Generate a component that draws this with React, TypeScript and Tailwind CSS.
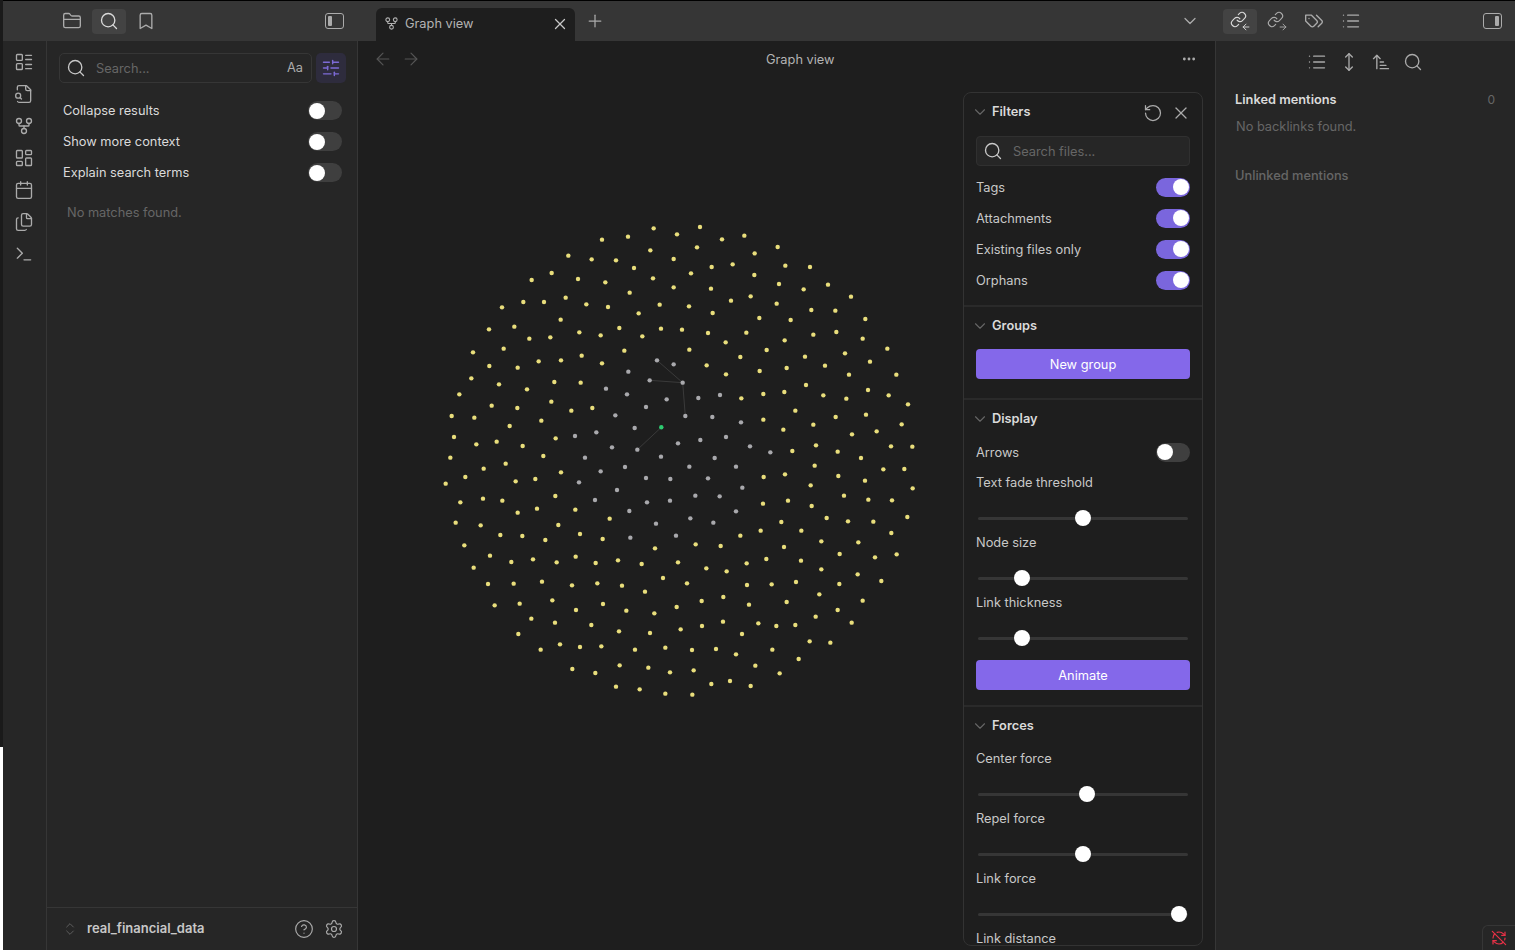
import type { ReactNode } from "react";
import {
  ArrowLeft, ArrowRight, ArrowUpNarrowWide, Bookmark, Calendar, ChevronDown, ChevronsUpDown, CircleHelp,
  Ellipsis, Files, FolderClosed, GitFork, LayoutDashboard, LayoutList, Link, List, MoveVertical, Plus,
  RefreshCwOff, RotateCcw, Search, Settings, SlidersHorizontal, Terminal, X,
} from "lucide-react";

const font = { fontFamily: "Inter, sans-serif" };

const TopBtn = ({ children, active }: { children: ReactNode; active?: boolean }) => (
  <div className={`w-[34px] h-[25px] rounded flex items-center justify-center ${active ? "bg-[#434343] text-[#dadada]" : "text-[#ababab]"}`}>
    {children}
  </div>
);

const PanelIcon = ({ right }: { right?: boolean }) => (
  <div className={`w-[19px] h-[16px] rounded-[3px] border-[1.5px] border-[#ababab] flex p-[2px] ${right ? "justify-end" : "justify-start"}`}>
    <div className="w-[4px] bg-[#ababab] rounded-[1px]" />
  </div>
);

const LinkArrow = ({ out }: { out?: boolean }) => (
  <div className="relative w-[20px] h-[20px]">
    <Link size={17} strokeWidth={1.6} className="absolute left-0 top-0" />
    <span className="absolute -right-[1px] -bottom-[1px]">
      {out ? <ArrowRight size={10} strokeWidth={2.2} /> : <ArrowLeft size={10} strokeWidth={2.2} />}
    </span>
  </div>
);

// lens sits bottom left, lucide's current file-search has it centred
const FileLens = () => (
  <svg width="20" height="20" viewBox="0 0 24 24" fill="none" stroke="currentColor" strokeWidth="1.6" strokeLinecap="round" strokeLinejoin="round">
    <path d="M14 2v4a2 2 0 0 0 2 2h4" />
    <path d="M4.268 21a2 2 0 0 0 1.727 1H18a2 2 0 0 0 2-2V7l-5-5H6a2 2 0 0 0-2 2v3" />
    <path d="m9 18-1.5-1.5" />
    <circle cx="5" cy="14" r="3" />
  </svg>
);

const TagsIcon = () => (
  <svg width="20" height="20" viewBox="0 0 24 24" fill="none" stroke="currentColor" strokeWidth="1.6" strokeLinecap="round" strokeLinejoin="round">
    <path d="M9 5H2v7l6.29 6.29c.94.94 2.48.94 3.42 0l3.58-3.58c.94-.94.94-2.48 0-3.42L9 5Z" />
    <path d="M6 9.01V9" />
    <path d="m15 5 6.3 6.3a2.4 2.4 0 0 1 0 3.4L17 19" />
  </svg>
);

const Toggle = ({ on }: { on?: boolean }) => (
  <div className={`w-[34px] h-[19px] rounded-full flex items-center px-[1px] ${on ? "bg-[#7a66dd] justify-end" : "bg-[#3f3f3f] justify-start"}`}>
    <div className="w-[16px] h-[16px] rounded-full bg-white" />
  </div>
);

const SearchRow = ({ label }: { label: string }) => (
  <div className="h-[31px] flex items-center justify-between pl-[16px] pr-[15px] text-[12.8px] text-[#dadada]">
    <span>{label}</span>
    <Toggle />
  </div>
);

const FilterRow = ({ label, on }: { label: string; on?: boolean }) => (
  <div className="h-[31px] flex items-center justify-between text-[12.8px] text-[#c8c8c8]">
    <span>{label}</span>
    <div className="-mt-[1px]"><Toggle on={on} /></div>
  </div>
);

const SliderRow = ({ label, pos }: { label: string; pos: number }) => (
  <div className="h-[60px] text-[12.8px] text-[#c8c8c8]">
    <div className="h-[24px] flex items-center">{label}</div>
    <div className="relative h-[3px] mt-[22px] mx-[2px] w-[210px] rounded-full bg-[#363636]">
      <div className="absolute -top-[7px] w-[16px] h-[16px] rounded-full bg-white" style={{ left: pos - 8 }} />
    </div>
  </div>
);

const SectionHead = ({ title }: { title: string }) => (
  <div className="flex items-center gap-[3px] -ml-[5px] h-[24px] text-[12.8px] font-semibold text-[#dadada]">
    <ChevronDown size={18} strokeWidth={1.5} className="text-[#666]" />
    <span>{title}</span>
  </div>
);

const PurpleBtn = ({ label }: { label: string }) => (
  <div className="h-[30px] pt-[1px] rounded bg-[#8468ea] flex items-center justify-center text-[12.8px] text-white">{label}</div>
);

// node positions read off the reference, 3x crop coords per 240px quadrant
type P = [number, number];
const yellow: { ox: number; oy: number; pts: P[] }[] = [
  { ox: 440, oy: 220, pts: [[641,25],[711,43],[564,50],[486,59],[631,91],[701,117],[385,107],[455,118],[528,121],[582,144],[335,159],[275,180],[414,177],[496,187],[639,175],[701,202],[569,218],[377,233],[250,246],[312,246],[186,262],[439,253],[504,261],[659,254],[596,280],[362,299],[223,320],[147,328],[538,324],[663,326],[418,337],[482,346],[607,349],[268,356],[331,352],[191,386],[99,397],[553,392],[425,407],[296,424],[363,421],[486,430],[148,438],[233,443],[94,475],[343,486],[422,488],[177,493],[261,508],[58,523],[334,545],[155,557],[232,564],[457,564],[394,572],[35,588],[103,593],[304,602],[209,618],[42,651],[347,655],[170,665],[109,673],[248,678],[310,708],[31,713]] },
  { ox: 680, oy: 220, pts: [[60,21],[193,47],[126,58],[51,82],[293,81],[224,100],[158,133],[95,141],[316,137],[390,141],[33,160],[223,165],[297,192],[444,194],[93,206],[371,208],[212,229],[513,230],[153,242],[290,251],[27,259],[394,270],[466,272],[98,279],[238,294],[332,300],[556,297],[6,329],[84,339],[199,338],[469,336],[400,344],[548,356],[314,361],[137,367],[28,389],[260,390],[622,386],[495,400],[181,411],[375,410],[570,425],[80,436],[435,437],[320,444],[239,453],[138,463],[507,464],[649,464],[378,495],[564,510],[313,516],[250,522],[430,526],[626,526],[184,535],[499,536],[684,553],[346,572],[558,584],[467,591],[250,599],[400,614],[665,613],[310,629],[590,634],[516,643],[408,676],[633,679],[697,680],[337,693],[473,695],[543,714]] },
  { ox: 440, oy: 460, pts: [[197,11],[131,26],[76,51],[363,37],[17,71],[227,64],[286,57],[346,108],[129,116],[187,122],[61,127],[406,149],[291,146],[233,158],[509,176],[47,188],[122,196],[355,195],[181,225],[247,228],[420,222],[316,240],[488,237],[73,256],[645,265],[150,287],[279,298],[214,306],[407,290],[350,307],[467,309],[534,301],[605,312],[714,307],[101,323],[669,354],[144,372],[221,371],[306,365],[396,376],[472,370],[546,377],[615,395],[337,421],[239,431],[164,436],[489,432],[710,441],[408,450],[559,452],[643,460],[274,476],[345,488],[454,495],[630,519],[537,514],[235,522],[360,553],[420,561],[484,559],[302,569],[585,569],[676,563],[539,616],[625,623],[397,627],[466,639],[690,637],[528,680],[599,688],[676,701]] },
  { ox: 680, oy: 460, pts: [[404,17],[610,28],[673,27],[315,43],[475,48],[251,51],[555,62],[392,76],[698,85],[492,107],[565,119],[636,121],[324,122],[249,131],[395,138],[682,171],[440,174],[304,186],[504,184],[580,185],[242,212],[364,212],[634,219],[181,227],[424,244],[535,247],[47,253],[122,258],[312,261],[479,282],[650,283],[585,292],[259,297],[363,302],[200,310],[79,325],[424,328],[140,334],[533,343],[604,363],[21,370],[348,366],[275,373],[201,375],[478,372],[418,403],[130,411],[65,423],[548,422],[207,434],[320,426],[473,450],[407,470],[66,498],[129,485],[235,490],[289,498],[346,495],[515,488],[2,508],[186,522],[389,544],[451,548],[36,570],[108,567],[168,583],[277,569],[356,597],[226,617],[41,631],[299,640],[94,672],[150,663],[212,678],[37,704]] },
];
const gray: { ox: number; oy: number; pts: P[] }[] = [
  { ox: 440, oy: 220, pts: [[651,421],[701,433],[565,455],[629,481],[498,506],[561,523],[680,538],[618,561],[526,586],[584,624],[469,637],[405,648],[516,682],[592,689],[714,670],[663,710],[435,713]] },
  { ox: 680, oy: 220, pts: [[8,488],[120,525],[55,534],[16,588],[97,591],[183,607],[138,651],[61,660],[210,679],[271,697],[104,714]] },
  { ox: 440, oy: 460, pts: [[555,21],[482,34],[618,54],[691,57],[417,67],[531,90],[465,120],[621,127],[690,122],[568,153],[648,191],[708,227],[571,233]] },
  { ox: 680, oy: 460, pts: [[28,20],[168,20],[84,55],[187,83],[46,107],[119,109],[168,154],[31,175],[100,188]] },
];

const Dots = ({ groups, fill }: { groups: { ox: number; oy: number; pts: P[] }[]; fill: string }) => (
  <>
    {groups.flatMap((g, gi) =>
      g.pts.map(([x, y], i) => <circle key={`${gi}-${i}`} cx={g.ox + x / 3} cy={g.oy + y / 3} r="2.2" fill={fill} />)
    )}
  </>
);

const Graph = () => (
  <svg className="absolute left-0 top-0 pointer-events-none" width="857" height="909" viewBox="358 41 857 909">
    <path d="M657 360.3 L682.7 382.7 M649.7 380.3 L682.7 382.7 L685.3 416 M661.3 427.3 L637.3 449.7" stroke="#3a3a3a" fill="none" />
    <Dots groups={yellow} fill="#e9de7c" />
    <Dots groups={gray} fill="#a9a9ad" />
    <circle cx="661.3" cy="427.3" r="2.2" fill="#2ecc71" />
  </svg>
);

export default function App() {
  return (
    <div className="w-[1515px] h-[950px] flex overflow-hidden bg-[#262626]" style={font}>
      <div className="w-[3px] flex flex-col">
        <div className="flex-1 bg-[#1a1a1a]" />
        <div className="h-[203px] bg-white" />
      </div>
      <div className="flex-1 flex flex-col min-w-0">
        {/* title bar */}
        <div className="h-[41px] border-t border-black bg-[#363636] flex items-center relative">
          <div className="w-[354px] flex items-center pl-[52px] gap-[3px] h-full">
            <TopBtn><FolderClosed size={20} strokeWidth={1.6} /></TopBtn>
            <TopBtn active><Search size={20} strokeWidth={1.6} /></TopBtn>
            <TopBtn><Bookmark size={20} strokeWidth={1.6} /></TopBtn>
            <div className="ml-auto mr-[13px]"><PanelIcon /></div>
          </div>
          <div className="self-end ml-[19px] w-[199px] h-[33px] rounded-t-[6px] bg-[#1e1e1e] flex items-center pl-[8px] pr-[6px] pb-[2px] text-[12.8px] text-[#b3b3b3]">
            <GitFork size={15} strokeWidth={1.7} />
            <span className="ml-[6px] flex-1">Graph view</span>
            <X size={18} strokeWidth={1.7} className="text-[#c8c8c8]" />
          </div>
          <Plus size={20} strokeWidth={1.5} className="ml-[10px] text-[#ababab]" />
          <div className="ml-auto flex items-center h-full">
            <ChevronDown size={20} strokeWidth={1.5} className="text-[#ababab] mr-[23px]" />
            <div className="flex items-center w-[151px] gap-[3px]">
              <TopBtn active><LinkArrow /></TopBtn>
              <TopBtn><LinkArrow out /></TopBtn>
              <TopBtn><TagsIcon /></TopBtn>
              <TopBtn><List size={20} strokeWidth={1.6} /></TopBtn>
            </div>
            <div className="ml-[109px] mr-[13px]"><PanelIcon right /></div>
          </div>
        </div>

        <div className="flex-1 flex min-h-0">
          {/* ribbon */}
          <div className="w-[44px] border-r border-[#363636] flex flex-col items-center pt-[11px] pr-[1px] gap-[12px] text-[#ababab]">
            <LayoutList size={20} strokeWidth={1.6} />
            <FileLens />
            <GitFork size={20} strokeWidth={1.6} />
            <LayoutDashboard size={20} strokeWidth={1.6} />
            <Calendar size={20} strokeWidth={1.6} />
            <Files size={20} strokeWidth={1.6} />
            <Terminal size={20} strokeWidth={1.6} />
          </div>

          {/* search panel */}
          <div className="w-[311px] border-r border-[#363636] flex flex-col">
            <div className="flex items-center gap-[4px] pl-[12px] pt-[12px]">
              <div className="w-[253px] h-[30px] rounded-[5px] border border-[#363636] flex items-center pl-[6px] pr-[8px] text-[12.8px]">
                <Search size={20} strokeWidth={1.6} className="text-[#c8c8c8]" />
                <span className="ml-[10px] flex-1 pt-[1px] text-[#666]">Search...</span>
                <span className="text-[#ababab]">Aa</span>
              </div>
              <div className="w-[30px] h-[30px] rounded-[5px] bg-[#2e2c3d] flex items-center justify-center text-[#7d6bd6]">
                <SlidersHorizontal size={20} strokeWidth={1.7} />
              </div>
            </div>
            <div className="mt-[12px]">
              <SearchRow label="Collapse results" />
              <SearchRow label="Show more context" />
              <SearchRow label="Explain search terms" />
            </div>
            <div className="mt-[15px] pl-[20px] text-[12.8px] text-[#666]">No matches found.</div>
            <div className="mt-auto h-[43px] border-t border-[#363636] flex items-center pl-[15px] pr-[13px] text-[13px] font-semibold text-[#c8c8c8]">
              <ChevronsUpDown size={16} strokeWidth={1.3} className="text-[#666]" />
              <span className="ml-[9px] flex-1">real_financial_data</span>
              <CircleHelp size={20} strokeWidth={1.4} className="text-[#ababab]" />
              <Settings size={20} strokeWidth={1.4} className="text-[#ababab] ml-[10px]" />
            </div>
          </div>

          {/* graph pane */}
          <div className="w-[858px] relative bg-[#1e1e1e] border-r border-[#363636] flex flex-col">
            <Graph />
            <div className="h-[36px] flex items-center pl-[15px] pr-[18px] text-[12.8px] text-[#b3b3b3] relative">
              <ArrowLeft size={20} strokeWidth={1.4} className="text-[#555]" />
              <ArrowRight size={20} strokeWidth={1.4} className="text-[#555] ml-[8px]" />
              <span className="ml-[345px] pt-[1px]">Graph view</span>
              <Ellipsis size={16} strokeWidth={2.2} className="ml-auto text-[#ababab]" />
            </div>
            {/* graph controls */}
            <div className="absolute right-[12px] top-[51px] w-[240px] h-[854px] rounded-[8px] border border-[#333] bg-[#1e1e1e] overflow-hidden">
              <div className="px-[12px] pt-[7px] pb-[9px] border-b-2 border-[#2a2a2a] relative">
                <SectionHead title="Filters" />
                <RotateCcw size={20} strokeWidth={1.5} className="absolute right-[39px] top-[10px] text-[#ababab]" />
                <X size={20} strokeWidth={1.5} className="absolute right-[11px] top-[10px] text-[#ababab]" />
                <div className="mt-[12px] h-[30px] rounded bg-[#262626] border border-[#303030] flex items-center pl-[6px] text-[12.8px] text-[#666]">
                  <Search size={20} strokeWidth={1.6} className="text-[#c8c8c8]" />
                  <span className="ml-[10px] pt-[1px]">Search files...</span>
                </div>
                <div className="mt-[6px]">
                  <FilterRow label="Tags" on />
                  <FilterRow label="Attachments" on />
                  <FilterRow label="Existing files only" on />
                  <FilterRow label="Orphans" on />
                </div>
              </div>
              <div className="px-[12px] pt-[7px] pb-[19px] border-b-2 border-[#2a2a2a]">
                <SectionHead title="Groups" />
                <div className="mt-[11px]"><PurpleBtn label="New group" /></div>
              </div>
              <div className="px-[12px] pt-[7px] pb-[15px] border-b-2 border-[#2a2a2a]">
                <SectionHead title="Display" />
                <div className="mt-[6px] mb-[3px]"><FilterRow label="Arrows" /></div>
                <SliderRow label="Text fade threshold" pos={105} />
                <SliderRow label="Node size" pos={44} />
                <SliderRow label="Link thickness" pos={44} />
                <div className="mt-[9px]"><PurpleBtn label="Animate" /></div>
              </div>
              <div className="px-[12px] pt-[7px]">
                <SectionHead title="Forces" />
                <div className="mt-[9px]">
                  <SliderRow label="Center force" pos={109} />
                  <SliderRow label="Repel force" pos={105} />
                  <SliderRow label="Link force" pos={201} />
                  <SliderRow label="Link distance" pos={120} />
                </div>
              </div>
            </div>
          </div>

          {/* backlinks */}
          <div className="flex-1 relative">
            <div className="h-[42px] flex items-center pl-[91px] gap-[12px] text-[#ababab]">
              <List size={20} strokeWidth={1.6} />
              <MoveVertical size={20} strokeWidth={1.6} />
              <ArrowUpNarrowWide size={20} strokeWidth={1.6} />
              <Search size={20} strokeWidth={1.6} />
            </div>
            <div className="pl-[19px] pr-[20px] pt-[7px] text-[12.8px]">
              <div className="flex justify-between h-[20px] items-center">
                <span className="font-semibold text-[#dadada]">Linked mentions</span>
                <span className="text-[#666] text-[12px]">0</span>
              </div>
              <div className="mt-[7px] pl-[1px] text-[#666]">No backlinks found.</div>
              <div className="mt-[30px] font-medium text-[#666]">Unlinked mentions</div>
            </div>
            <div className="absolute right-0 bottom-0 w-[33px] h-[25px] rounded-tl-[6px] border-t border-l border-[#363636] flex items-center justify-center">
              <RefreshCwOff size={16} strokeWidth={1.8} className="text-[#e93147]" />
            </div>
          </div>
        </div>
      </div>
    </div>
  );
}
